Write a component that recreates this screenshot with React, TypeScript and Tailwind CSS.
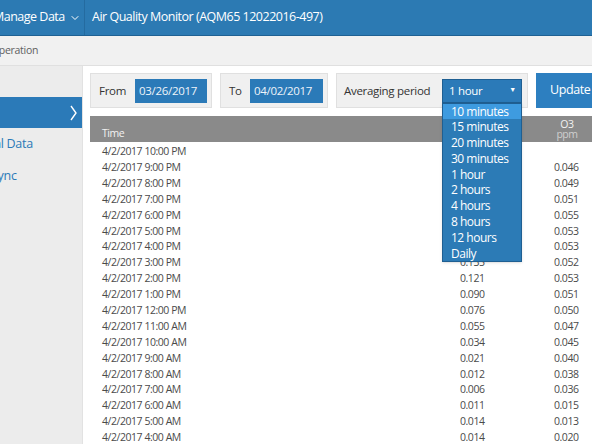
import { ChevronDown } from 'lucide-react';

const rows: [string, string, string][] = [
  ['4/2/2017 10:00 PM', '', ''],
  ['4/2/2017 9:00 PM', '', '0.046'],
  ['4/2/2017 8:00 PM', '', '0.049'],
  ['4/2/2017 7:00 PM', '', '0.051'],
  ['4/2/2017 6:00 PM', '', '0.055'],
  ['4/2/2017 5:00 PM', '', '0.053'],
  ['4/2/2017 4:00 PM', '', '0.053'],
  ['4/2/2017 3:00 PM', '0.135', '0.052'],
  ['4/2/2017 2:00 PM', '0.121', '0.053'],
  ['4/2/2017 1:00 PM', '0.090', '0.051'],
  ['4/2/2017 12:00 PM', '0.076', '0.050'],
  ['4/2/2017 11:00 AM', '0.055', '0.047'],
  ['4/2/2017 10:00 AM', '0.034', '0.045'],
  ['4/2/2017 9:00 AM', '0.021', '0.040'],
  ['4/2/2017 8:00 AM', '0.012', '0.038'],
  ['4/2/2017 7:00 AM', '0.006', '0.036'],
  ['4/2/2017 6:00 AM', '0.011', '0.015'],
  ['4/2/2017 5:00 AM', '0.014', '0.013'],
  ['4/2/2017 4:00 AM', '0.014', '0.020'],
];

const periods = ['10 minutes', '15 minutes', '20 minutes', '30 minutes', '1 hour', '2 hours', '4 hours', '8 hours', '12 hours', 'Daily'];

export default function App() {
  return (
    <div className="w-[592px] h-[444px] overflow-hidden bg-white flex flex-col font-['Open_Sans','Noto_Sans',sans-serif]">
      {/* top bar */}
      <div className="h-[36px] shrink-0 bg-[#2c7ab3] border-b border-[#1f6193] flex items-center text-white text-[12.5px] tracking-[-0.5px]">
        <div className="w-[85px] h-full shrink-0 flex items-center border-r border-[#246ba0] gap-[4px] whitespace-nowrap overflow-hidden">
          <span className="ml-[-7px]">Manage Data</span>
          <ChevronDown className="w-3 h-3 shrink-0" strokeWidth={2} />
        </div>
        <div className="pl-[7px] whitespace-nowrap">Air Quality Monitor (AQM65 12022016-497)</div>
      </div>

      {/* breadcrumb */}
      <div className="h-[30px] shrink-0 bg-[#f1f1f1] border-b border-[#e0e0e0] flex items-center overflow-hidden">
        <span className="ml-[-9px] text-[10.5px] tracking-[-0.3px] text-[#606060] whitespace-nowrap">Operation</span>
      </div>

      <div className="flex flex-1 min-h-0">
        {/* sidebar */}
        <div className="w-[83px] shrink-0 bg-[#ececec] border-r border-[#e2e2e2] pt-[31px] overflow-hidden">
          <div className="h-[31px] bg-[#2b7ab8] flex items-center justify-end pr-[5px]">
            <svg width="7" height="16" viewBox="0 0 7 16" fill="none" stroke="white" strokeWidth="1.4">
              <polyline points="1,1 6,8 1,15" />
            </svg>
          </div>
          <div className="h-[32px] flex items-center text-[12.5px] tracking-[-0.3px] text-[#2b7ab8] whitespace-nowrap ml-[-48px]">Historical Data</div>
          <div className="h-[32px] flex items-center text-[12.5px] tracking-[-0.3px] text-[#2b7ab8] whitespace-nowrap ml-[-9px]">Sync</div>
        </div>

        {/* main */}
        <div className="flex-1 min-w-0 pl-[7px] pt-[7px] overflow-hidden">
          <div className="flex gap-[8px] h-[35px] text-[11.5px] tracking-[-0.3px]">
            <div className="w-[122px] shrink-0 bg-[#f0f0f0] border border-[#e0e0e0] flex items-center justify-between pl-[8px] pr-[4px]">
              <span className="text-[#333]">From</span>
              <div className="w-[72px] h-[24px] bg-[#2b7ab8] text-[#eef4fa] flex items-center pl-[4px]">03/26/2017</div>
            </div>
            <div className="w-[108px] shrink-0 bg-[#f0f0f0] border border-[#e0e0e0] flex items-center justify-between pl-[8px] pr-[4px]">
              <span className="text-[#333]">To</span>
              <div className="w-[73px] h-[24px] bg-[#2b7ab8] text-[#eef4fa] flex items-center pl-[4px]">04/02/2017</div>
            </div>
            <div className="w-[192px] shrink-0 bg-[#f0f0f0] border border-[#e0e0e0] flex items-center justify-between pl-[7px] pr-[5px]">
              <span className="text-[#333]">Averaging period</span>
              <div className="relative w-[80px] h-[24px]">
                <div className="h-full bg-[#2b7ab8] border border-[#1f5f92] text-white flex items-center justify-between pl-[6px] pr-[5px]">
                  <span>1 hour</span>
                  <span className="text-[7px]">▼</span>
                </div>
                <div className="absolute left-0 top-[24px] w-[80px] bg-[#2c7bb6] border border-[#1f5f92] text-white text-[12px] tracking-[-0.5px] z-10 shadow">
                  {periods.map((p, i) => (
                    <div key={p} className={`h-[15.8px] leading-[15.8px] pl-[8px] ${i === 0 ? 'bg-[#3e9be0]' : ''}`}>{p}</div>
                  ))}
                </div>
              </div>
            </div>
            <button className="w-[70px] shrink-0 bg-[#2d7fc0] text-white text-[12.5px] tracking-[-0.4px] text-left pl-[14px]">Update</button>
          </div>

          {/* table */}
          <div className="mt-[8px] text-[10.5px] tracking-[-0.45px]">
            <div className="h-[26px] bg-[#8a8a8a] flex text-[#f2f2f2]">
              <div className="w-[358px] shrink-0 pl-[12px] flex items-end">Time</div>
              {/* this column's header sits under the open dropdown */}
              <div className="w-[94px] shrink-0" />
              <div className="w-[50px] shrink-0 flex flex-col items-center justify-center leading-[10px]">
                <span>O3</span>
                <span className="text-[#cfcfcf]">ppm</span>
              </div>
            </div>
            <div className="pt-[2px]">
              {rows.map(([t, a, b]) => (
                <div key={t} className="h-[15.9px] flex items-center text-[#4a4a4a]">
                  <div className="w-[358px] shrink-0 pl-[12px]">{t}</div>
                  <div className="w-[94px] shrink-0 pl-[12px]">{a}</div>
                  <div className="w-[50px] shrink-0 pl-[12px]">{b}</div>
                </div>
              ))}
            </div>
          </div>
        </div>
      </div>
    </div>
  );
}
